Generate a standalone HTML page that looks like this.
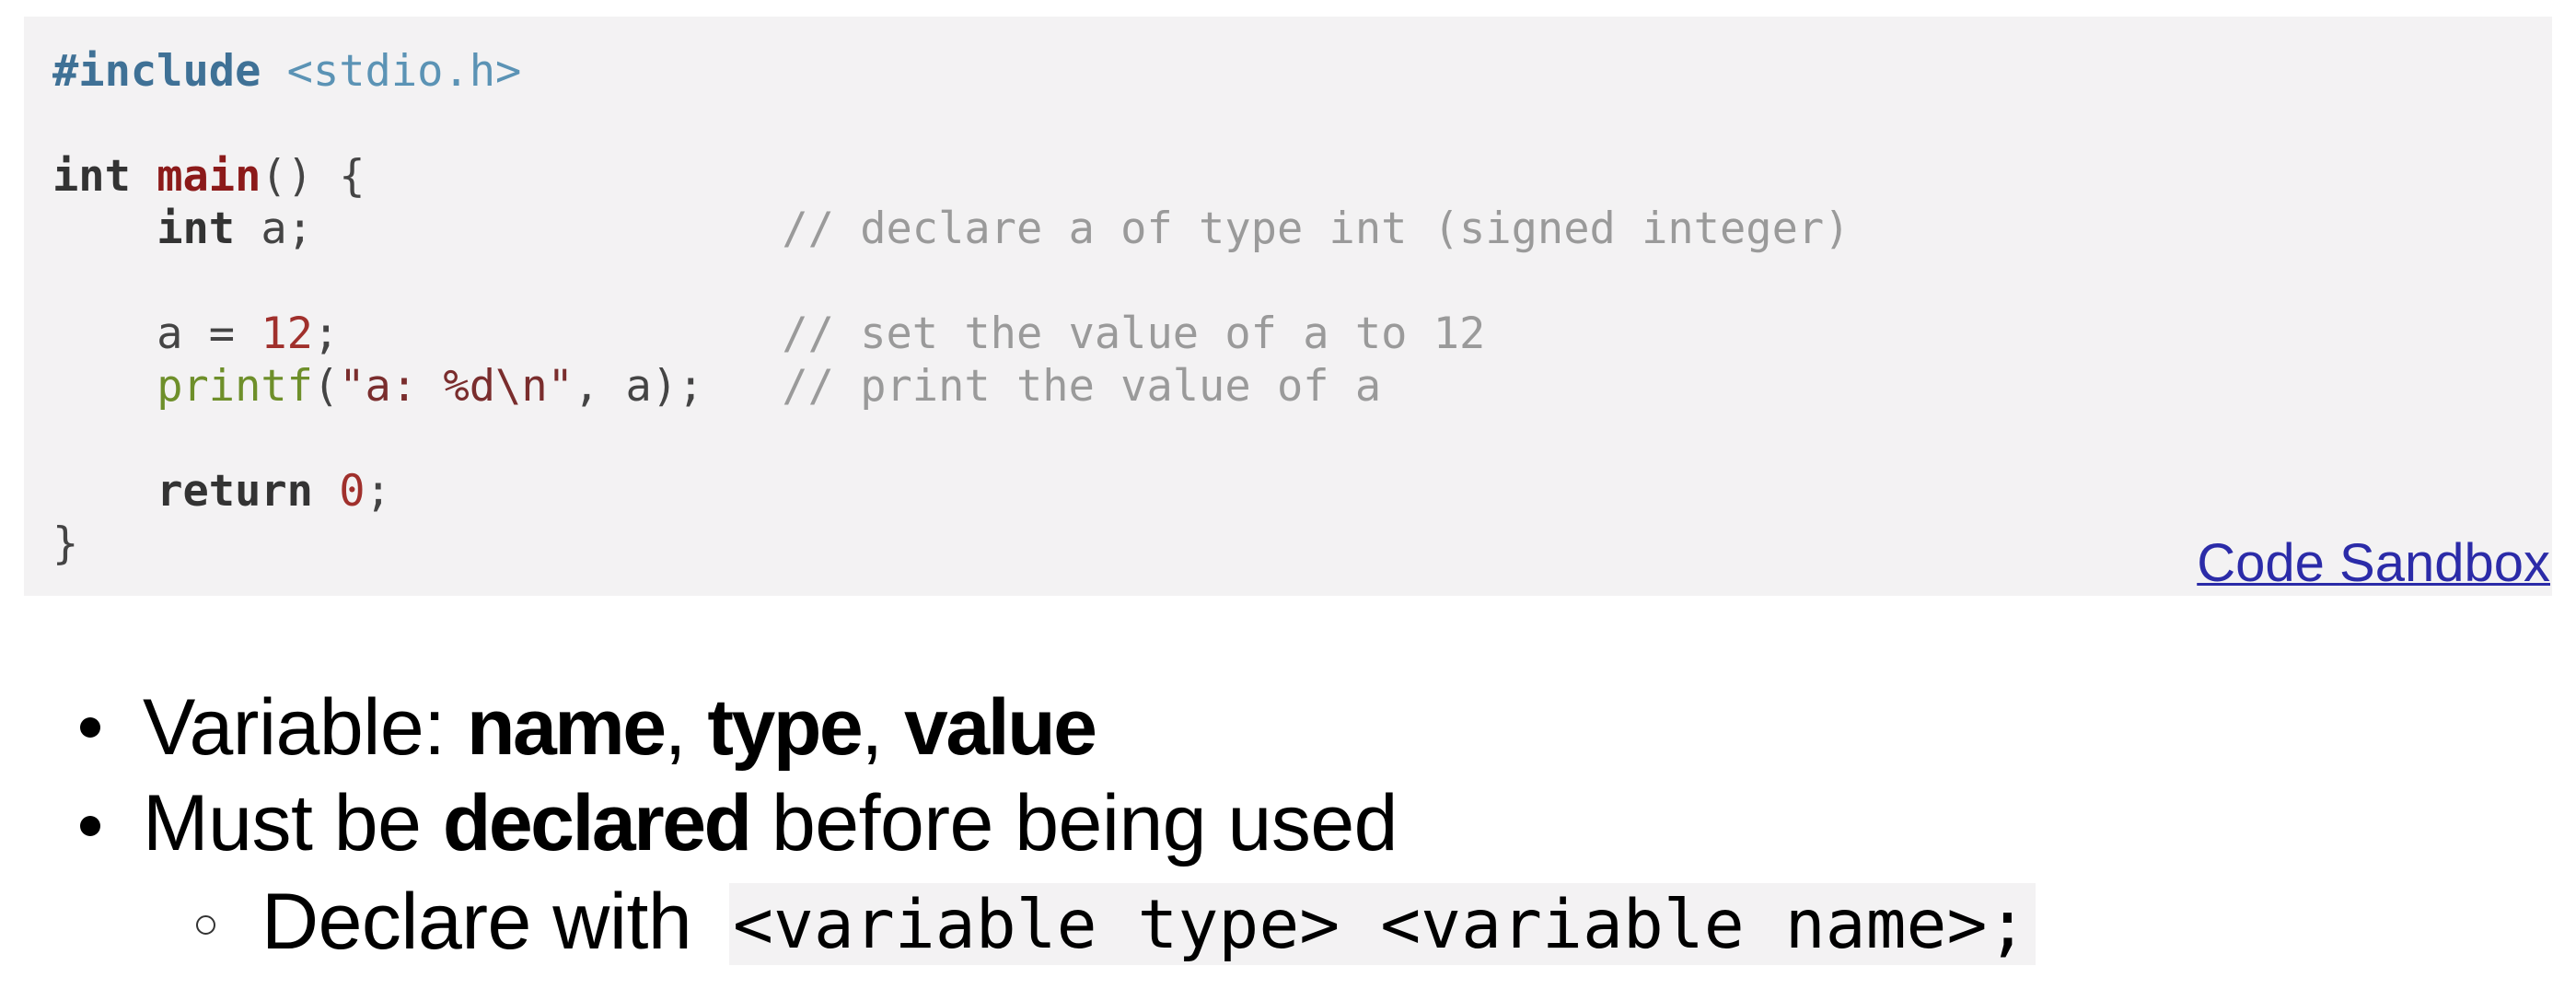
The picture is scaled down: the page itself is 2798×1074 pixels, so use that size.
<!DOCTYPE html>
<html><head><meta charset="utf-8"><style>
html,body{margin:0;padding:0;background:#fff;width:2798px;height:1074px;overflow:hidden;position:relative}
.box{position:absolute;left:26px;top:18px;width:2746px;height:629px;background:#f3f2f3}
.ln{position:absolute;left:57px;font-family:"DejaVu Sans Mono","Liberation Mono",monospace;font-size:47px;line-height:57px;white-space:pre;color:#444}
.kw{font-weight:bold;color:#333}
.pp{font-weight:bold;color:#3f7196}
.inc{color:#5b93b5}
.fn{font-weight:bold;color:#8c1a1a}
.bi{color:#6e8f2a}
.st{color:#7a2d2d}
.nu{color:#a0302c}
.cm{color:#9a9a9a}
.link{position:absolute;right:28px;top:578px;font-family:"Liberation Sans",sans-serif;font-size:58px;color:#2b2ba8;text-decoration:underline;text-decoration-thickness:3px;white-space:pre}
.b{position:absolute;font-family:"Liberation Sans",sans-serif;font-size:86px;line-height:100px;color:#000;white-space:pre;letter-spacing:-0.5px}
.b strong{letter-spacing:-2.5px}
.dot{position:absolute;width:22px;height:22px;border-radius:50%;background:#000}
.circ{position:absolute;width:17px;height:17px;border-radius:50%;border:2px solid #333}
.code{position:absolute;left:792px;top:959px;width:1419px;height:89px;background:#f3f2f3}
.ct{position:absolute;left:796px;top:960px;font-family:"DejaVu Sans Mono","Liberation Mono",monospace;font-size:73px;line-height:89px;white-space:pre;color:#000}
</style></head><body>
<div class="box"></div>
<div class="ln" style="top:49px"><span class="pp">#include</span> <span class="inc">&lt;stdio.h&gt;</span></div>
<div class="ln" style="top:163px"><span class="kw">int</span> <span class="fn">main</span>() {</div>
<div class="ln" style="top:220px">    <span class="kw">int</span> a;                  <span class="cm">// declare a of type int (signed integer)</span></div>
<div class="ln" style="top:334px">    a = <span class="nu">12</span>;                 <span class="cm">// set the value of a to 12</span></div>
<div class="ln" style="top:391px">    <span class="bi">printf</span>(<span class="st">"a: %d\n"</span>, a);   <span class="cm">// print the value of a</span></div>
<div class="ln" style="top:505px">    <span class="kw">return</span> <span class="nu">0</span>;</div>
<div class="ln" style="top:562px">}</div>
<div class="link">Code <span>Sandbox</span></div>

<div class="dot" style="left:87px;top:779px"></div>
<div class="b" style="left:155px;top:740px">Variable: <strong>name</strong>, <strong>type</strong>, <strong>value</strong></div>
<div class="dot" style="left:87px;top:886px"></div>
<div class="b" style="left:155px;top:844px">Must be <strong>declared</strong> before being used</div>
<div class="circ" style="left:213px;top:994px"></div>
<div class="b" style="left:284px;top:951px">Declare with</div>
<div class="code"></div>
<div class="ct">&lt;variable type&gt; &lt;variable name&gt;;</div>
</body></html>
